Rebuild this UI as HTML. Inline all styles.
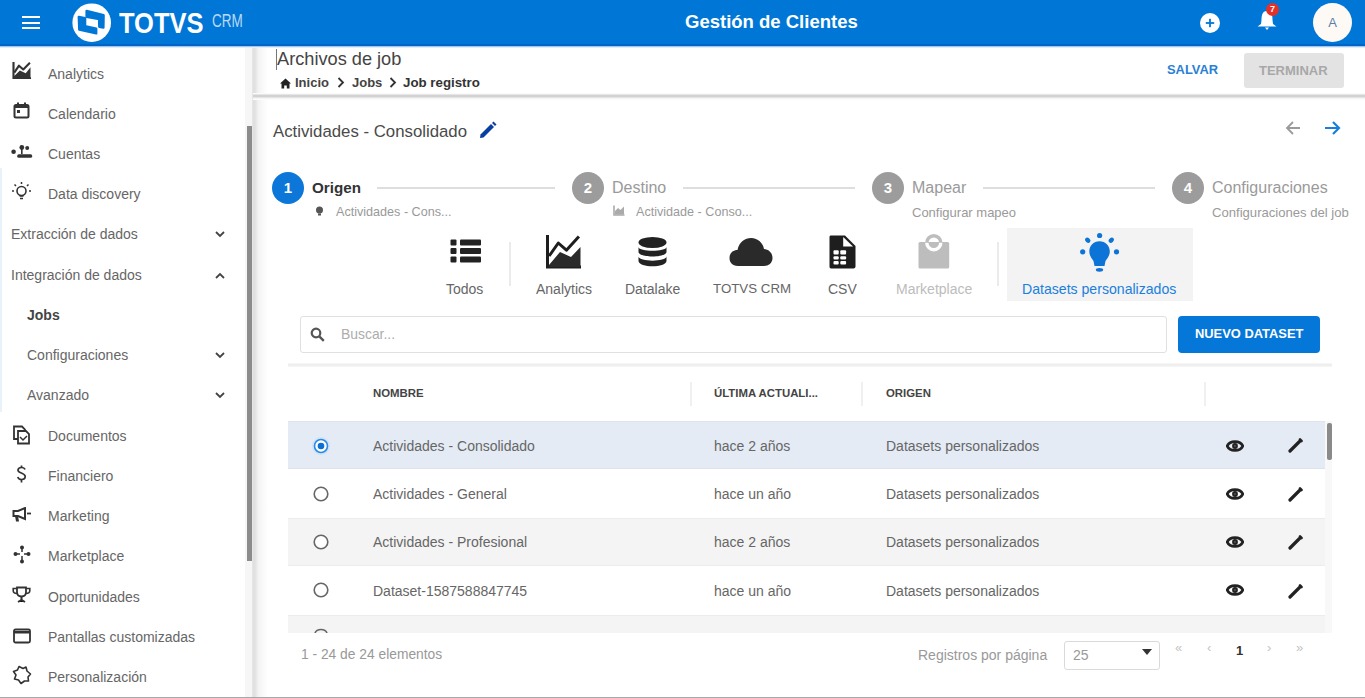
<!DOCTYPE html>
<html><head><meta charset="utf-8">
<style>
*{box-sizing:border-box;margin:0;padding:0}
html,body{width:1365px;height:698px;overflow:hidden;background:#fff;font-family:"Liberation Sans",sans-serif;color:#333}
.abs{position:absolute}
#hdr{position:absolute;left:0;top:0;width:1365px;height:46px;background:#0077d6;border-bottom:2px solid #0064c9;height:46px}
#side{position:absolute;left:0;top:46px;width:252px;height:652px;background:#fff}
.si{position:absolute;margin-top:0.6px;left:48px;font-size:14px;color:#666;white-space:nowrap;line-height:16px}
.sic{position:absolute;left:12px;width:20px;height:20px}
.chev{position:absolute;left:214px;width:12px;height:8px}
#main{position:absolute;left:252px;top:46px;width:1113px;height:652px;background:#fff}
.t{position:absolute;white-space:nowrap;line-height:1}
</style></head><body>

<!-- HEADER -->
<div id="hdr">
  <div class="abs" style="left:22px;top:16px;width:18px;height:2px;background:#fff"></div>
  <div class="abs" style="left:22px;top:21.5px;width:18px;height:2px;background:#fff"></div>
  <div class="abs" style="left:22px;top:27px;width:18px;height:2px;background:#fff"></div>
  <svg class="abs" style="left:66px;top:0px" width="50" height="46" viewBox="0 0 50 46">
    <circle cx="25.7" cy="22.7" r="19.3" fill="#fff"/>
    <path d="M20.6 10.9 L37.6 15.2 L37.4 27.6 L33.3 26.8 L33.1 19.1 L20.6 16.8 Z" fill="#0077d6" stroke="#0077d6" stroke-width="2.4" stroke-linejoin="round"/>
    <path d="M12.8 16.9 L19.1 18.2 L19.1 26.2 L30.2 28.7 L30.2 33.4 L13.3 29.7 Z" fill="#0077d6" stroke="#0077d6" stroke-width="2.4" stroke-linejoin="round"/>
  </svg>
  <div class="t" style="left:119px;top:8px;font-size:30px;font-weight:bold;color:#fff;transform:scaleX(0.85);transform-origin:0 0">TOTVS</div>
  <div class="t" style="left:212px;top:12px;font-size:18px;color:#bcd9f5;transform:scaleX(0.75);transform-origin:0 0">CRM</div>
  <div class="t" style="left:685px;top:13px;font-size:18.5px;font-weight:bold;color:#fff">Gestión de Clientes</div>
  <svg class="abs" style="left:1199px;top:12px" width="22" height="22" viewBox="0 0 22 22">
    <circle cx="11" cy="11" r="10" fill="#fff"/>
    <rect x="6.8" y="10.1" width="8.4" height="1.8" fill="#0077d6"/>
    <rect x="10.1" y="6.8" width="1.8" height="8.4" fill="#0077d6"/>
  </svg>
  <svg class="abs" style="left:1256px;top:8px" width="22" height="24" viewBox="0 0 22 24">
    <path d="M11 3 C6 3 5.5 8 5.5 12 L5 16 L1.5 18.5 L20.5 18.5 L17 16 L16.5 12 C16.5 8 16 3 11 3 Z" fill="#fff"/>
    <path d="M9 19.5 L13 19.5 L11 22 Z" fill="#fff"/>
  </svg>
  <div class="abs" style="left:1266px;top:3px;width:13px;height:13px;border-radius:50%;background:#e5302a;color:#fff;font-size:9px;font-weight:bold;text-align:center;line-height:13px">7</div>
  <div class="abs" style="left:1313px;top:3px;width:39px;height:39px;border-radius:50%;background:#fdfaf5;color:#5b7fa8;font-size:13px;text-align:center;line-height:39px">A</div>
</div>

<!-- SIDEBAR -->
<div id="side"></div>
<div class="abs" style="left:0;top:168px;width:2px;height:244px;background:#e8f2fb"></div>
<div class="si" style="left:48px;top:65px;">Analytics</div>
<svg class="abs" style="left:12px;top:62px" width="20" height="17" viewBox="0 0 36 32"><path d="M2 0 V30.5 H35" fill="none" stroke="#333" stroke-width="4"/><path d="M3 31 L3 27 L14 16 L25 21 L34 10 L34 31 Z" fill="#333"/><path d="M3.5 20 L12.3 7 L20.4 14 L32.9 1.5" fill="none" stroke="#333" stroke-width="4" stroke-linejoin="round"/></svg>
<div class="si" style="left:48px;top:105px;">Calendario</div>
<svg class="abs" style="left:13px;top:102px" width="17" height="17" viewBox="0 0 17 17"><rect x="1.5" y="3" width="14" height="12.5" rx="1.5" fill="none" stroke="#333" stroke-width="2"/><rect x="1" y="3" width="15" height="3" fill="#333"/><rect x="4" y="0.5" width="2" height="3" fill="#333"/><rect x="11" y="0.5" width="2" height="3" fill="#333"/><rect x="4" y="8" width="3" height="3" fill="#333"/></svg>
<div class="si" style="left:48px;top:145px;">Cuentas</div>
<svg class="abs" style="left:10px;top:143px" width="24" height="16" viewBox="0 0 24 16"><circle cx="3.6" cy="8.8" r="2.3" fill="#333"/><circle cx="11.8" cy="4.5" r="2.4" fill="#333"/><circle cx="17.2" cy="5" r="2" fill="#333"/><rect x="7.2" y="11.3" width="15" height="3.5" rx="1.6" fill="#333"/><rect x="11" y="6" width="1.6" height="5" fill="#333"/></svg>
<div class="si" style="left:48px;top:185px;">Data discovery</div>
<svg class="abs" style="left:11px;top:181px" width="21" height="21" viewBox="0 0 21 21"><circle cx="10.5" cy="10" r="4.5" fill="none" stroke="#333" stroke-width="1.6"/><path d="M8.5 15 H12.5 M9 17.5 H12" stroke="#333" stroke-width="1.5"/><path d="M10.5 1 V3 M1 10 H3 M18 10 H20 M3.5 3.5 L5 5 M17.5 3.5 L16 5" stroke="#333" stroke-width="1.5"/></svg>
<div class="si" style="left:11px;top:225px;">Extracción de dados</div>
<svg class="abs" style="left:214px;top:230px" width="12" height="8" viewBox="0 0 12 8"><path d="M2 2 L6 6 L10 2" fill="none" stroke="#444" stroke-width="1.8"/></svg>
<div class="si" style="left:11px;top:266px;">Integración de dados</div>
<svg class="abs" style="left:214px;top:272px" width="12" height="8" viewBox="0 0 12 8"><path d="M2 6 L6 2 L10 6" fill="none" stroke="#444" stroke-width="1.8"/></svg>
<div class="si" style="left:27px;top:306px;font-weight:bold;color:#444">Jobs</div>
<div class="si" style="left:27px;top:346px;">Configuraciones</div>
<svg class="abs" style="left:214px;top:351px" width="12" height="8" viewBox="0 0 12 8"><path d="M2 2 L6 6 L10 2" fill="none" stroke="#444" stroke-width="1.8"/></svg>
<div class="si" style="left:27px;top:386px;">Avanzado</div>
<svg class="abs" style="left:214px;top:391px" width="12" height="8" viewBox="0 0 12 8"><path d="M2 2 L6 6 L10 2" fill="none" stroke="#444" stroke-width="1.8"/></svg>
<div class="si" style="left:48px;top:427px;">Documentos</div>
<svg class="abs" style="left:12px;top:425px" width="19" height="20" viewBox="0 0 19 20"><path d="M2 1.5 H10 L13 4.5 V14 H2 Z" fill="none" stroke="#333" stroke-width="1.8"/><path d="M6 6 H14 L17 9 V18.5 H6 Z" fill="#fff" stroke="#333" stroke-width="1.8"/><path d="M8 12 L11 15 L15 11" fill="none" stroke="#333" stroke-width="1.5"/></svg>
<div class="si" style="left:48px;top:467px;">Financiero</div>
<svg class="abs" style="left:16px;top:465px" width="11" height="18" viewBox="0 0 11 18"><path d="M9 4.5 C8.5 3 7 2.5 5.5 2.5 C3.5 2.5 2 3.5 2 5.2 C2 8.5 9.2 7.5 9.2 11.5 C9.2 13.5 7.5 14.5 5.5 14.5 C3.5 14.5 2.2 13.5 1.8 12" fill="none" stroke="#333" stroke-width="1.7"/><path d="M5.5 0.5 V2.5 M5.5 14.5 V17.5" stroke="#333" stroke-width="1.7"/></svg>
<div class="si" style="left:48px;top:507px;">Marketing</div>
<svg class="abs" style="left:12px;top:507px" width="20" height="16" viewBox="0 0 20 16"><path d="M1.5 4 H6 L13 1 V12 L6 9 H1.5 Z" fill="none" stroke="#333" stroke-width="2"/><path d="M3 9 L4 14.5 H7 L6 9" fill="#333"/><path d="M15 6.5 H19" stroke="#333" stroke-width="1.8"/></svg>
<div class="si" style="left:48px;top:547px;">Marketplace</div>
<svg class="abs" style="left:13px;top:545px" width="18" height="19" viewBox="0 0 18 19"><circle cx="9" cy="2.5" r="2" fill="#333"/><circle cx="2.5" cy="9" r="2" fill="#333"/><circle cx="15.5" cy="9" r="2" fill="#333"/><circle cx="9" cy="16.5" r="2" fill="#333"/><path d="M9 2.5 V7 M9 11 V16.5 M2.5 9 H7 M11 9 H15.5" stroke="#333" stroke-width="1.5"/></svg>
<div class="si" style="left:48px;top:588px;">Oportunidades</div>
<svg class="abs" style="left:12px;top:586px" width="19" height="18" viewBox="0 0 19 18"><path d="M5 1.5 H14 V6 C14 9 12 10.5 9.5 10.5 C7 10.5 5 9 5 6 Z" fill="none" stroke="#333" stroke-width="1.8"/><path d="M5 2.5 H1.2 V4.5 C1.2 6.5 3 7.5 5 7.5 M14 2.5 H17.8 V4.5 C17.8 6.5 16 7.5 14 7.5" fill="none" stroke="#333" stroke-width="1.6"/><path d="M9.5 10.5 V14 M6 16 L9.5 14 L13 16" stroke="#333" stroke-width="2"/></svg>
<div class="si" style="left:48px;top:628px;">Pantallas customizadas</div>
<svg class="abs" style="left:13px;top:628px" width="18" height="16" viewBox="0 0 18 16"><rect x="1" y="1.5" width="16" height="13" rx="1.5" fill="none" stroke="#333" stroke-width="1.8"/><rect x="1" y="3" width="16" height="2.5" fill="#333"/></svg>
<div class="si" style="left:48px;top:668px;">Personalización</div>
<svg class="abs" style="left:12px;top:665px" width="20" height="20" viewBox="0 0 20 20"><path d="M7 1.5 L11 3.5 L14 2 L15 6 L18.5 9 L16 12 L16.5 16 L12.5 16 L9 18.5 L6.5 15 L2.5 14 L4 10 L1.5 6.5 L5.5 5 Z" fill="none" stroke="#333" stroke-width="1.6" stroke-linejoin="round"/></svg>

<!-- MAIN -->
<div id="main"></div>
<!-- sidebar scrollbar and divider -->
<div class="abs" style="left:245px;top:46px;width:7px;height:651px;background:#f6f6f6"></div>
<div class="abs" style="left:246.5px;top:125.5px;width:5.5px;height:435px;background:#8c8c8c"></div>
<div class="abs" style="left:252px;top:46px;width:16px;height:651px;background:linear-gradient(to right,#e8e8e8 0,#dedede 2px,#e6e6e6 4px,#f2f2f2 6px,#f8f8f8 10px,#fff 16px)"></div>

<!-- page header -->
<div class="abs" style="left:0;top:46px;width:1365px;height:2px;background:linear-gradient(#9cc6ec 0,#9cc6ec 1px,#e4eef8 1px)"></div>
<div class="abs" style="left:276px;top:49px;width:1px;height:21px;background:#777"></div>
<div class="t" style="left:277px;top:50px;font-size:18.2px;color:#444">Archivos de job</div>
<svg class="abs" style="left:280px;top:78px" width="11" height="11" viewBox="0 0 11 11"><path d="M5.5 0.5 L11 5.5 L9.5 5.5 L9.5 10.5 L6.8 10.5 L6.8 7.5 L4.2 7.5 L4.2 10.5 L1.5 10.5 L1.5 5.5 L0 5.5 Z" fill="#222"/></svg>
<div class="t" style="left:295px;top:76px;font-size:13px;font-weight:bold;color:#444">Inicio</div>
<svg class="abs" style="left:337px;top:77px" width="8" height="11" viewBox="0 0 8 11"><path d="M1.5 1 L6 5.5 L1.5 10" fill="none" stroke="#333" stroke-width="1.8"/></svg>
<div class="t" style="left:352px;top:76px;font-size:13px;font-weight:bold;color:#444">Jobs</div>
<svg class="abs" style="left:389px;top:77px" width="8" height="11" viewBox="0 0 8 11"><path d="M1.5 1 L6 5.5 L1.5 10" fill="none" stroke="#333" stroke-width="1.8"/></svg>
<div class="t" style="left:403px;top:76px;font-size:13.3px;font-weight:bold;color:#333">Job registro</div>
<div class="t" style="left:1167px;top:64px;font-size:12.9px;font-weight:bold;color:#2a7fd4">SALVAR</div>
<div class="abs" style="left:1244px;top:53px;width:100px;height:35px;border-radius:3px;background:#e3e3e3"></div>
<div class="t" style="left:1259px;top:64px;font-size:13px;font-weight:bold;color:#a8a8a8">TERMINAR</div>
<div class="abs" style="left:253px;top:93px;width:1112px;height:7px;background:linear-gradient(#fafafa 0,#fafafa 1px,#e6e6e6 1px,#e6e6e6 2px,#d2d2d2 2px,#d2d2d2 4px,#e4e4e4 4px,#e4e4e4 5px,#f5f5f5 5px,#f5f5f5 6px,#fcfcfc 6px)"></div>

<!-- title -->
<div class="t" style="left:273px;top:124px;font-size:16.8px;color:#4a4a4a">Actividades - Consolidado</div>
<svg class="abs" style="left:478px;top:121px" width="19" height="19" viewBox="0 0 19 19"><path d="M2 17 L2.5 13.5 L13 3 L16 6 L5.5 16.5 Z" fill="#0a3ea2"/><path d="M14 2 L15.5 0.5 L18.5 3.5 L17 5 Z" fill="#0a3ea2"/></svg>
<svg class="abs" style="left:1285px;top:120px" width="16" height="16" viewBox="0 0 16 16"><path d="M15 8 H2 M8 2 L2 8 L8 14" fill="none" stroke="#9a9a9a" stroke-width="1.8"/></svg>
<svg class="abs" style="left:1324px;top:120px" width="17" height="16" viewBox="0 0 17 16"><path d="M1 8 H15 M9 2 L15 8 L9 14" fill="none" stroke="#1a7fdc" stroke-width="2.2"/></svg>

<!-- stepper -->
<div class="abs" style="left:272px;top:172px;width:32px;height:32px;border-radius:50%;background:#0c77d8;color:#fff;font-size:15px;font-weight:bold;text-align:center;line-height:32px">1</div>
<div class="t" style="left:312px;top:180px;font-size:15.2px;font-weight:bold;color:#333">Origen</div>
<div class="abs" style="left:377px;top:187px;width:178px;height:2px;background:#dedede"></div>
<svg class="abs" style="left:315px;top:206px" width="9" height="11" viewBox="0 0 9 11"><circle cx="4.5" cy="4" r="3.5" fill="#555"/><rect x="3" y="7.5" width="3" height="2" fill="#555"/></svg>
<div class="t" style="left:336px;top:206px;font-size:12.6px;color:#999">Actividades - Cons...</div>

<div class="abs" style="left:572px;top:172px;width:32px;height:32px;border-radius:50%;background:#9c9c9c;color:#fff;font-size:15px;font-weight:bold;text-align:center;line-height:32px">2</div>
<div class="t" style="left:612px;top:180px;font-size:16px;color:#9a9a9a">Destino</div>
<div class="abs" style="left:683px;top:187px;width:172px;height:2px;background:#dedede"></div>
<svg class="abs" style="left:613px;top:205px" width="12" height="11" viewBox="0 0 12 11"><path d="M1 0.5 V10 H11.5" fill="none" stroke="#aaa" stroke-width="1.6"/><path d="M2 9.5 L2 6 L5 3 L7.5 5 L11 1.5 L11 9.5 Z" fill="#aaa"/></svg>
<div class="t" style="left:636px;top:206px;font-size:12.6px;color:#9a9a9a">Actividade - Conso...</div>

<div class="abs" style="left:872px;top:172px;width:32px;height:32px;border-radius:50%;background:#9c9c9c;color:#fff;font-size:15px;font-weight:bold;text-align:center;line-height:32px">3</div>
<div class="t" style="left:912px;top:180px;font-size:16px;color:#9a9a9a">Mapear</div>
<div class="abs" style="left:983px;top:187px;width:172px;height:2px;background:#dedede"></div>
<div class="t" style="left:912px;top:206px;font-size:13px;color:#9a9a9a">Configurar mapeo</div>

<div class="abs" style="left:1172px;top:172px;width:32px;height:32px;border-radius:50%;background:#9c9c9c;color:#fff;font-size:15px;font-weight:bold;text-align:center;line-height:32px">4</div>
<div class="t" style="left:1212px;top:180px;font-size:16px;color:#9a9a9a">Configuraciones</div>
<div class="t" style="left:1212px;top:206px;font-size:13.1px;color:#9a9a9a">Configuraciones del job</div>
<!-- tabs -->
<div class="abs" style="left:1007px;top:228px;width:186px;height:73px;background:#f3f3f3"></div>
<div class="abs" style="left:509px;top:242px;width:2px;height:44px;background:#ebebeb"></div>
<div class="abs" style="left:997px;top:242px;width:2px;height:44px;background:#ebebeb"></div>

<svg class="abs" style="left:450px;top:239px" width="31" height="25" viewBox="0 0 31 25"><rect x="0.5" y="0.5" width="6" height="6" rx="1" fill="#222"/><rect x="0.5" y="9" width="6" height="6" rx="1" fill="#222"/><rect x="0.5" y="17.5" width="6" height="6" rx="1" fill="#222"/><rect x="10" y="0.5" width="21" height="6" rx="1" fill="#222"/><rect x="10" y="9" width="21" height="6" rx="1" fill="#222"/><rect x="10" y="17.5" width="21" height="6" rx="1" fill="#222"/></svg>
<div class="t" style="left:446px;top:282px;font-size:14px;color:#666">Todos</div>

<svg class="abs" style="left:546px;top:235px" width="36" height="34" viewBox="0 0 36 34"><path d="M1.5 0 V32 H35" fill="none" stroke="#1e1e1e" stroke-width="3"/><path d="M3 32 L3 30 L14 17 L25 22 L34.5 12 L34.5 32 Z" fill="#2a2a2a"/><path d="M3.1 21 L12.3 8 L20.4 15.2 L32.9 1.5" fill="none" stroke="#1e1e1e" stroke-width="3" stroke-linejoin="round"/></svg>
<div class="t" style="left:536px;top:282px;font-size:14px;color:#666">Analytics</div>

<svg class="abs" style="left:637px;top:236px" width="31" height="32" viewBox="0 0 31 32"><ellipse cx="15.5" cy="6.5" rx="14" ry="5.5" fill="#222"/><path d="M1.5 11 C2 16 29 16 29.5 11 L29.5 16 C29 22 2 22 1.5 16 Z" fill="#222"/><path d="M1.5 20.5 C2 26 29 26 29.5 20.5 L29.5 25 C29 32 2 32 1.5 25 Z" fill="#222"/></svg>
<div class="t" style="left:625px;top:282px;font-size:14px;color:#666">Datalake</div>

<svg class="abs" style="left:729px;top:237px" width="44" height="30" viewBox="0 0 44 30"><path d="M9 29 C3 29 0.5 25 0.5 21 C0.5 16 4 13 8.5 13 C10 5 16 1 22 1 C29 1 34 6 35 12 C40 12.5 43.5 16 43.5 21 C43.5 26 39.5 29 35 29 Z" fill="#2a2a2a"/></svg>
<div class="t" style="left:713px;top:282px;font-size:13.3px;color:#666">TOTVS CRM</div>

<svg class="abs" style="left:829px;top:235px" width="27" height="34" viewBox="0 0 27 34"><path d="M2 0.5 H16 L26.5 11 V31.5 C26.5 32.5 25.5 33.5 24.5 33.5 H2 C1 33.5 0.5 32.5 0.5 31.5 V2 C0.5 1 1 0.5 2 0.5 Z" fill="#1e1e1e"/><path d="M14.2 2 L14.2 11.6 L24 11.6 Z" fill="#fff"/><rect x="4.5" y="15.2" width="5.2" height="4.2" rx="1" fill="#fff"/><rect x="11.3" y="15.2" width="5.8" height="4.2" rx="1" fill="#fff"/><rect x="4.5" y="21.3" width="5.2" height="3.2" rx="1" fill="#fff"/><rect x="11.3" y="21.3" width="5.8" height="3.2" rx="1" fill="#fff"/><rect x="4.5" y="26.1" width="5.2" height="3.3" rx="1" fill="#fff"/><rect x="11.3" y="26.1" width="5.8" height="3.3" rx="1" fill="#fff"/></svg>
<div class="t" style="left:828px;top:282px;font-size:14px;color:#666">CSV</div>

<svg class="abs" style="left:918px;top:232px" width="33" height="38" viewBox="0 0 33 38"><circle cx="15.8" cy="10.7" r="7" fill="none" stroke="#bdbdbd" stroke-width="3.4"/><rect x="0.5" y="10" width="30.7" height="26.5" rx="1.5" fill="#bdbdbd"/><path d="M8.8 10.7 A7 7 0 0 0 22.8 10.7" fill="none" stroke="#fff" stroke-width="3.4"/></svg>
<div class="t" style="left:896px;top:282px;font-size:14px;color:#bcbcbc">Marketplace</div>

<svg class="abs" style="left:1079px;top:232px" width="42" height="42" viewBox="0 0 42 42"><circle cx="20.6" cy="3.5" r="2.6" fill="#0b74d6"/><ellipse cx="8.8" cy="8.2" rx="2.9" ry="2.3" transform="rotate(40 8.8 8.2)" fill="#0b74d6"/><ellipse cx="32.3" cy="8.2" rx="2.9" ry="2.3" transform="rotate(-40 32.3 8.2)" fill="#0b74d6"/><circle cx="3.7" cy="19.8" r="2.6" fill="#0b74d6"/><circle cx="37.5" cy="19.8" r="2.6" fill="#0b74d6"/><path d="M20.5 9.2 C14.5 9.2 10.3 13.5 10.3 19.5 C10.3 24 13 26.5 14.5 29 L15.5 34 H25.5 L26.5 29 C28 26.5 30.8 24 30.8 19.5 C30.8 13.5 26.5 9.2 20.5 9.2 Z" fill="#0b74d6"/><ellipse cx="20.5" cy="37.8" rx="3.7" ry="1.9" fill="#0b74d6"/></svg>
<div class="t" style="left:1022px;top:282px;font-size:14.1px;color:#1a80dc">Datasets personalizados</div>

<!-- search -->
<div class="abs" style="left:300px;top:316px;width:867px;height:37px;border:1.5px solid #e0e0e0;border-radius:3px;background:#fff"></div>
<svg class="abs" style="left:310px;top:327px" width="16" height="15" viewBox="0 0 16 15"><circle cx="6" cy="6" r="4.3" fill="none" stroke="#555" stroke-width="2.2"/><path d="M9.3 9.3 L13.8 13.8" stroke="#555" stroke-width="2.4"/></svg>
<div class="t" style="left:341px;top:328px;font-size:13.9px;color:#adadad">Buscar...</div>
<div class="abs" style="left:1178px;top:316px;width:142px;height:37px;border-radius:4px;background:#0577d9"></div>
<div class="t" style="left:1195px;top:328px;font-size:12.9px;font-weight:bold;color:#fff">NUEVO DATASET</div>

<!-- table -->
<div class="abs" style="left:288px;top:363px;width:1044px;height:4px;background:linear-gradient(#f9f9f9,#eeeeee 40%,#eeeeee 60%,#f9f9f9)"></div>
<div class="t" style="left:373px;top:388px;font-size:11.4px;font-weight:bold;color:#444">NOMBRE</div>
<div class="abs" style="left:690px;top:382px;width:2px;height:24px;background:#f0f0f0"></div>
<div class="t" style="left:714px;top:388px;font-size:11.4px;font-weight:bold;color:#444">ÚLTIMA ACTUALI...</div>
<div class="abs" style="left:861px;top:382px;width:2px;height:24px;background:#f0f0f0"></div>
<div class="t" style="left:886px;top:388px;font-size:11.4px;font-weight:bold;color:#444">ORIGEN</div>
<div class="abs" style="left:1204px;top:382px;width:2px;height:24px;background:#f0f0f0"></div>
<div class="abs" style="left:288px;top:421px;width:1037px;height:48px;background:#e4ebf5;border-top:1px solid #dfe4ea;border-bottom:1px solid #dce3ec"></div>
<svg class="abs" style="left:311px;top:436px" width="20" height="20" viewBox="0 0 20 20"><circle cx="10" cy="10" r="9" fill="#cfe3f8"/><circle cx="10" cy="10" r="6.5" fill="#fff" stroke="#2a8ae6" stroke-width="1.6"/><circle cx="10" cy="10" r="3.3" fill="#0b6fd3"/></svg>
<div class="t" style="left:373px;top:438.6px;font-size:14px;color:#666">Actividades - Consolidado</div>
<div class="t" style="left:714px;top:438.6px;font-size:14px;color:#666">hace 2 años</div>
<div class="t" style="left:886px;top:438.6px;font-size:14px;color:#666">Datasets personalizados</div>
<svg class="abs" style="left:1226px;top:440px" width="18" height="12" viewBox="0 0 18 12"><path d="M9 1.6 C5 1.6 2.2 3.8 1.2 6 C2.2 8.2 5 10.4 9 10.4 C13 10.4 15.8 8.2 16.8 6 C15.8 3.8 13 1.6 9 1.6 Z" fill="none" stroke="#222" stroke-width="2.8"/><circle cx="9" cy="6" r="2.9" fill="#222"/><circle cx="9" cy="6" r="1" fill="#555"/></svg>
<svg class="abs" style="left:1288px;top:438px" width="15" height="15" viewBox="0 0 15 15"><path d="M2 13 L11.5 3.5" stroke="#222" stroke-width="3.2" stroke-linecap="round"/><path d="M12 1.5 L13.5 3" stroke="#222" stroke-width="2.6" stroke-linecap="round"/></svg>
<div class="abs" style="left:288px;top:469px;width:1037px;height:49px;background:#ffffff"></div>
<svg class="abs" style="left:311px;top:484px" width="20" height="20" viewBox="0 0 20 20"><circle cx="10" cy="10" r="6.8" fill="#fff" stroke="#666" stroke-width="1.6"/></svg>
<div class="t" style="left:373px;top:487.1px;font-size:14px;color:#666">Actividades - General</div>
<div class="t" style="left:714px;top:487.1px;font-size:14px;color:#666">hace un año</div>
<div class="t" style="left:886px;top:487.1px;font-size:14px;color:#666">Datasets personalizados</div>
<svg class="abs" style="left:1226px;top:488px" width="18" height="12" viewBox="0 0 18 12"><path d="M9 1.6 C5 1.6 2.2 3.8 1.2 6 C2.2 8.2 5 10.4 9 10.4 C13 10.4 15.8 8.2 16.8 6 C15.8 3.8 13 1.6 9 1.6 Z" fill="none" stroke="#222" stroke-width="2.8"/><circle cx="9" cy="6" r="2.9" fill="#222"/><circle cx="9" cy="6" r="1" fill="#555"/></svg>
<svg class="abs" style="left:1288px;top:487px" width="15" height="15" viewBox="0 0 15 15"><path d="M2 13 L11.5 3.5" stroke="#222" stroke-width="3.2" stroke-linecap="round"/><path d="M12 1.5 L13.5 3" stroke="#222" stroke-width="2.6" stroke-linecap="round"/></svg>
<div class="abs" style="left:288px;top:518px;width:1037px;height:48px;background:#f4f4f4;border-top:1px solid #ececec;border-bottom:1px solid #ededed"></div>
<svg class="abs" style="left:311px;top:532px" width="20" height="20" viewBox="0 0 20 20"><circle cx="10" cy="10" r="6.8" fill="#fff" stroke="#666" stroke-width="1.6"/></svg>
<div class="t" style="left:373px;top:535.1px;font-size:14px;color:#666">Actividades - Profesional</div>
<div class="t" style="left:714px;top:535.1px;font-size:14px;color:#666">hace 2 años</div>
<div class="t" style="left:886px;top:535.1px;font-size:14px;color:#666">Datasets personalizados</div>
<svg class="abs" style="left:1226px;top:536px" width="18" height="12" viewBox="0 0 18 12"><path d="M9 1.6 C5 1.6 2.2 3.8 1.2 6 C2.2 8.2 5 10.4 9 10.4 C13 10.4 15.8 8.2 16.8 6 C15.8 3.8 13 1.6 9 1.6 Z" fill="none" stroke="#222" stroke-width="2.8"/><circle cx="9" cy="6" r="2.9" fill="#222"/><circle cx="9" cy="6" r="1" fill="#555"/></svg>
<svg class="abs" style="left:1288px;top:535px" width="15" height="15" viewBox="0 0 15 15"><path d="M2 13 L11.5 3.5" stroke="#222" stroke-width="3.2" stroke-linecap="round"/><path d="M12 1.5 L13.5 3" stroke="#222" stroke-width="2.6" stroke-linecap="round"/></svg>
<div class="abs" style="left:288px;top:566px;width:1037px;height:49px;background:#ffffff"></div>
<svg class="abs" style="left:311px;top:580px" width="20" height="20" viewBox="0 0 20 20"><circle cx="10" cy="10" r="6.8" fill="#fff" stroke="#666" stroke-width="1.6"/></svg>
<div class="t" style="left:373px;top:583.6px;font-size:14px;color:#666">Dataset-1587588847745</div>
<div class="t" style="left:714px;top:583.6px;font-size:14px;color:#666">hace un año</div>
<div class="t" style="left:886px;top:583.6px;font-size:14px;color:#666">Datasets personalizados</div>
<svg class="abs" style="left:1226px;top:584px" width="18" height="12" viewBox="0 0 18 12"><path d="M9 1.6 C5 1.6 2.2 3.8 1.2 6 C2.2 8.2 5 10.4 9 10.4 C13 10.4 15.8 8.2 16.8 6 C15.8 3.8 13 1.6 9 1.6 Z" fill="none" stroke="#222" stroke-width="2.8"/><circle cx="9" cy="6" r="2.9" fill="#222"/><circle cx="9" cy="6" r="1" fill="#555"/></svg>
<svg class="abs" style="left:1288px;top:584px" width="15" height="15" viewBox="0 0 15 15"><path d="M2 13 L11.5 3.5" stroke="#222" stroke-width="3.2" stroke-linecap="round"/><path d="M12 1.5 L13.5 3" stroke="#222" stroke-width="2.6" stroke-linecap="round"/></svg>
<div class="abs" style="left:288px;top:615px;width:1037px;height:18px;background:#f4f4f4;border-top:1px solid #ececec"></div>
<svg class="abs" style="left:311px;top:628px" width="20" height="5" viewBox="0 0 20 5"><path d="M4 5 C5 2.5 7 1.5 10 1.5 C13 1.5 15 2.5 16 5" fill="none" stroke="#666" stroke-width="1.6"/></svg>
<div class="abs" style="left:1325px;top:421px;width:7px;height:212px;background:#f8f8f8"></div>
<div class="abs" style="left:1326.5px;top:423px;width:5.5px;height:37px;border-radius:2px;background:#8a8a8a"></div>
<div class="t" style="left:301px;top:648px;font-size:13.8px;color:#999">1 - 24 de 24 elementos</div>
<div class="t" style="left:918px;top:648px;font-size:14px;color:#999">Registros por página</div>
<div class="abs" style="left:1064px;top:641px;width:96px;height:29px;border:1px solid #dadada;border-radius:3px;background:#fff"></div>
<div class="t" style="left:1073px;top:648px;font-size:14px;color:#999">25</div>
<svg class="abs" style="left:1142px;top:649px" width="10" height="6" viewBox="0 0 10 6"><path d="M0 0 H10 L5 6 Z" fill="#333"/></svg>
<div class="t" style="left:1175px;top:641px;font-size:13px;color:#c4c4c4">«</div>
<div class="t" style="left:1207px;top:641px;font-size:13px;color:#c4c4c4">‹</div>
<div class="t" style="left:1236px;top:644px;font-size:13px;font-weight:bold;color:#333">1</div>
<div class="t" style="left:1267px;top:641px;font-size:13px;color:#c4c4c4">›</div>
<div class="t" style="left:1296px;top:641px;font-size:13px;color:#c4c4c4">»</div>
<div class="abs" style="left:0;top:697px;width:1365px;height:1px;background:#a8a8a8"></div>

</body></html>
